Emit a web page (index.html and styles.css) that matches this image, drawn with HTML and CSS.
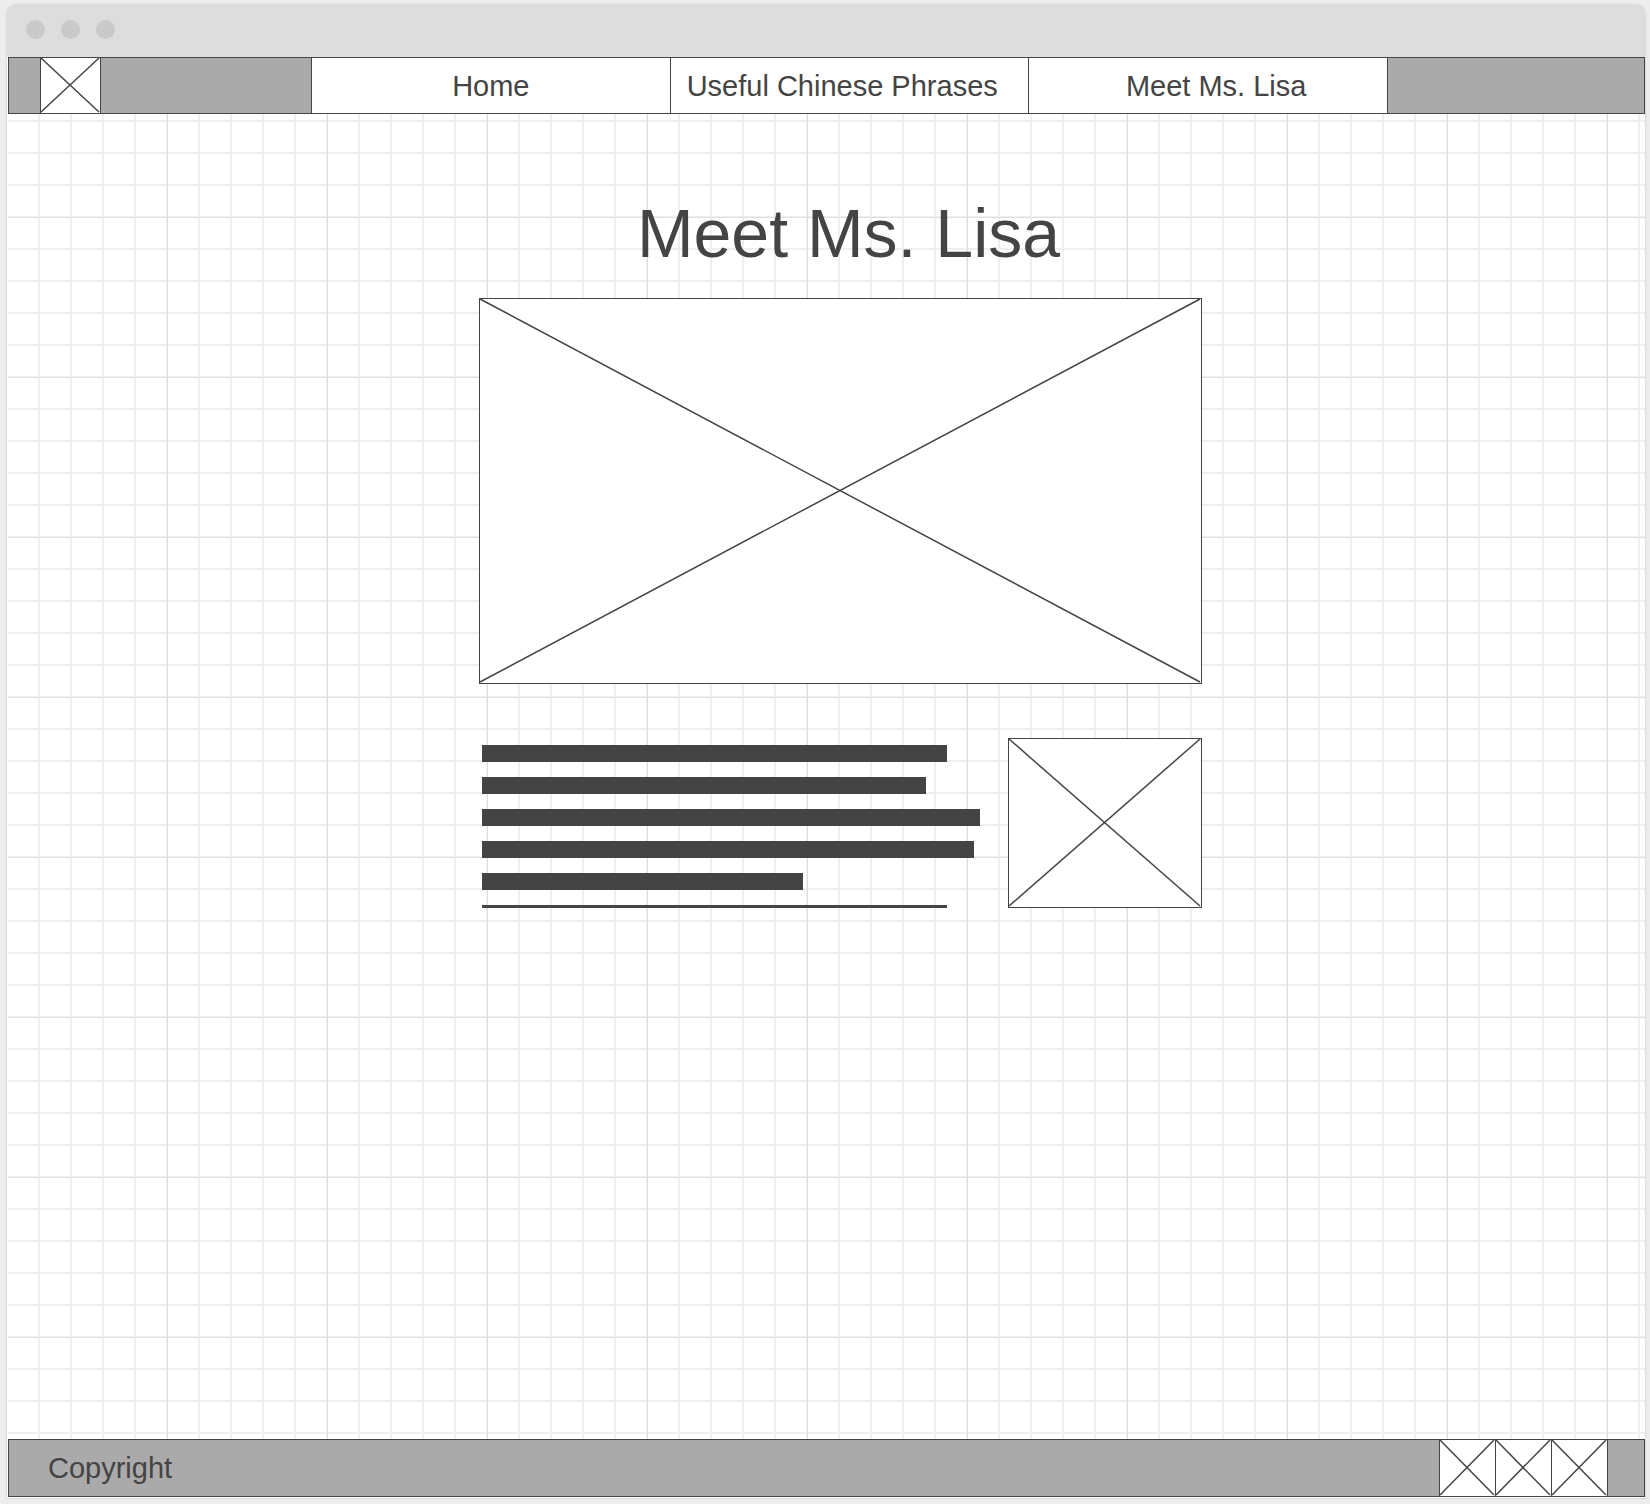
FILE: index.html
```html
<!DOCTYPE html>
<html lang="en">
<head>
<meta charset="utf-8">
<meta name="viewport" content="width=device-width, initial-scale=1">
<title>Meet Ms. Lisa</title>
<link rel="stylesheet" href="styles.css">
</head>
<body>
<div class="window">
  <div class="titlebar">
    <span class="dot"></span><span class="dot"></span><span class="dot"></span>
  </div>
  <header class="navbar">
    <div class="brand">
      <div class="placeholder logo"><svg class="cross" aria-hidden="true"><line x1="0" y1="0" x2="100%" y2="100%"/><line x1="0" y1="100%" x2="100%" y2="0"/></svg></div>
    </div>
    <nav class="links">
      <a class="link" href="#home">Home</a>
      <a class="link link-long" href="#phrases">Useful Chinese Phrases</a>
      <a class="link link-current" href="#lisa">Meet Ms. Lisa</a>
    </nav>
  </header>
  <main class="page">
    <div class="content">
      <h1 class="title">Meet Ms. Lisa</h1>
      <div class="placeholder hero"><svg class="cross" aria-hidden="true"><line x1="0" y1="0" x2="100%" y2="100%"/><line x1="0" y1="100%" x2="100%" y2="0"/></svg></div>
      <div class="about">
        <div class="textlines">
          <div class="bar" style="width:93.4%"></div>
          <div class="bar" style="width:89.2%"></div>
          <div class="bar" style="width:100%"></div>
          <div class="bar" style="width:98.8%"></div>
          <div class="bar" style="width:64.4%"></div>
          <div class="bar" style="width:93.4%"></div>
        </div>
        <div class="placeholder"><svg class="cross" aria-hidden="true"><line x1="0" y1="0" x2="100%" y2="100%"/><line x1="0" y1="100%" x2="100%" y2="0"/></svg></div>
      </div>
    </div>
  </main>
  <footer class="footer">
    <span class="copyright">Copyright</span>
    <div class="social">
      <div class="placeholder icon"><svg class="cross" aria-hidden="true"><line x1="0" y1="0" x2="100%" y2="100%"/><line x1="0" y1="100%" x2="100%" y2="0"/></svg></div>
      <div class="placeholder icon"><svg class="cross" aria-hidden="true"><line x1="0" y1="0" x2="100%" y2="100%"/><line x1="0" y1="100%" x2="100%" y2="0"/></svg></div>
      <div class="placeholder icon"><svg class="cross" aria-hidden="true"><line x1="0" y1="0" x2="100%" y2="100%"/><line x1="0" y1="100%" x2="100%" y2="0"/></svg></div>
    </div>
  </footer>
</div>
</body>
</html>
```
FILE: styles.css
```css
* {
  box-sizing: border-box;
}

body {
  margin: 0;
  min-height: 100vh;
  display: flex;
  padding: 4px 4px 5px 6px;
  background: #ededed;
  color: #444;
  font-family: "Liberation Sans", Arial, sans-serif;
  font-size: 29px;
  line-height: 36px;
}

/* Browser frame */
.window {
  flex: 1;
  display: flex;
  flex-direction: column;
  padding: 0 0 1px 1px;
  border: 1px solid #ddd;
  border-top: 0;
  border-radius: 10px 10px 0 0;
  background: linear-gradient(#ddd 53px, #fff 53px);
  box-shadow: 0 0 2px #ddd;
}

.titlebar {
  display: flex;
  gap: 16px;
  height: 53px;
  padding: 16px 18px;
}

.dot {
  width: 19px;
  height: 19px;
  border-radius: 50%;
  background: #c9c9c9;
}

/* Crossed boxes standing in for images */
.placeholder {
  border: 1px solid #444;
  background: #fff;
  padding: 0 1px 1px 0;
}

.cross {
  display: block;
  width: 100%;
  height: 100%;
  overflow: visible;
  stroke: #444;
  stroke-width: 1.5;
}

/* Navigation */
.navbar {
  display: grid;
  grid-template-columns: 302fr 1077fr 256fr;
  grid-template-rows: minmax(0, 1fr);
  height: 57px;
  border: 1px solid #444;
  background: #aaa;
}

.brand {
  display: flex;
  padding-left: 31px;
}

.logo {
  width: 61px;
  border-width: 0 1px;
}

.links {
  display: grid;
  grid-template-columns: repeat(3, 1fr);
  border-right: 1px solid #444;
}

.link {
  display: flex;
  align-items: center;
  justify-content: center;
  border-left: 1px solid #444;
  background: #fff;
  color: inherit;
  text-decoration: none;
  white-space: nowrap;
}

.link-long {
  justify-content: flex-start;
  padding-left: 16px;
}

.link-current {
  padding-left: 16px;
}

/* Page body on graph paper */
.page {
  flex: 1;
  padding: 80px 0 80px 28px;
  background:
    linear-gradient(90deg, transparent 1px, #dfdfdf 1px, #dfdfdf 2px, transparent 2px) 158px 0 / 160px 160px,
    linear-gradient(transparent 1px, #dfdfdf 1px, #dfdfdf 2px, transparent 2px) 0 102px / 160px 160px,
    linear-gradient(90deg, #efefef 2px, transparent 2px) 30px 0 / 32px 32px,
    linear-gradient(#efefef 2px, transparent 2px) 0 6px / 32px 32px,
    #fff;
}

.content {
  max-width: 723px;
  margin: 0 auto;
}

.title {
  margin: 0 0 26px;
  padding-left: 16px;
  font-size: 68px;
  font-weight: 400;
  line-height: 78px;
  text-align: center;
}

.hero {
  aspect-ratio: 723 / 386;
}

.about {
  display: grid;
  grid-template-columns: 1fr 194px;
  gap: 28px;
  height: 170px;
  margin-top: 54px;
}

.textlines {
  padding: 7px 0 0 3px;
  overflow: hidden;
}

.bar {
  height: 17px;
  margin-bottom: 15px;
  background: #444;
}

/* Footer */
.footer {
  display: flex;
  justify-content: space-between;
  height: 58px;
  padding: 0 36px 0 39px;
  border: 1px solid #444;
  background: #aaa;
}

.copyright {
  align-self: center;
}

.social {
  display: flex;
}

.icon {
  width: 56px;
  border-width: 0 0 0 1px;
}

.icon:last-child {
  width: 57px;
  border-right-width: 1px;
}
```
